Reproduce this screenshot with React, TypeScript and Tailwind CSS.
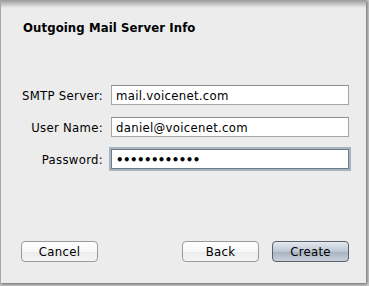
import React from "react";

const font = { fontFamily: '"Lucida Grande", "DejaVu Sans Condensed", "DejaVu Sans", Verdana, sans-serif' };

function Field({ label, value, focused, password }: { label: string; value: string; focused?: boolean; password?: boolean }) {
  return (
    <div className="flex items-center h-[20px]">
      <div className="w-[102px] text-right pr-[8px] text-[13px] text-black leading-none">{label}</div>
      <div
        className={
          "w-[238px] h-[20px] bg-white flex items-center pl-[4px] text-[13px] text-black leading-none " +
          (focused
            ? "border border-[#6e7b8c] shadow-[0_0_0_2px_#a8b3c0]"
            : "border border-[#a5a5a5] border-t-[#8e8e8e]")
        }
      >
        {password ? <span className="tracking-[-0.5px] text-[13px] font-bold">{value}</span> : value}
      </div>
    </div>
  );
}

function Button({ children, primary }: { children: React.ReactNode; primary?: boolean }) {
  return (
    <div
      className={
        "w-[77px] h-[21px] rounded-[4px] flex items-center justify-center text-[13px] text-black leading-none border " +
        (primary
          ? "border-[#5a626d] bg-[linear-gradient(#e4e9ef,#bcc6d2_50%,#a6b2c1_52%,#c9d1db)]"
          : "border-[#9b9b9b] bg-[linear-gradient(#ffffff,#f7f7f7_50%,#ececec_52%,#f4f4f4)]")
      }
    >
      {children}
    </div>
  );
}

export default function App() {
  return (
    <div className="w-[369px] h-[286px] bg-[#c9c9c9] overflow-hidden tracking-[0.3px]" style={font}>
      <div className="relative w-[366px] h-[283px] bg-[#ececec] border-l border-[#a9a9a9] shadow-[1px_1px_3px_rgba(0,0,0,0.5)] flex flex-col">
        <div className="absolute left-0 right-0 top-0 h-[8px] bg-[linear-gradient(rgba(0,0,0,0.35),rgba(0,0,0,0))]" />
        <div className="pl-[22px] pt-[21px] text-[13px] font-bold text-black leading-none tracking-[0.1px]">Outgoing Mail Server Info</div>
        <div className="flex flex-col gap-[12px] pt-[51px] pl-[8px]">
          <Field label="SMTP Server:" value="mail.voicenet.com" />
          <Field label="User Name:" value="daniel@voicenet.com" />
          <Field label="Password:" value="••••••••••••" focused password />
        </div>
        <div className="flex mt-auto mb-[21px] pl-[20px] pr-[17px]">
          <Button>Cancel</Button>
          <div className="flex-1" />
          <div className="flex gap-[13px]">
            <Button>Back</Button>
            <Button primary>Create</Button>
          </div>
        </div>
      </div>
    </div>
  );
}
